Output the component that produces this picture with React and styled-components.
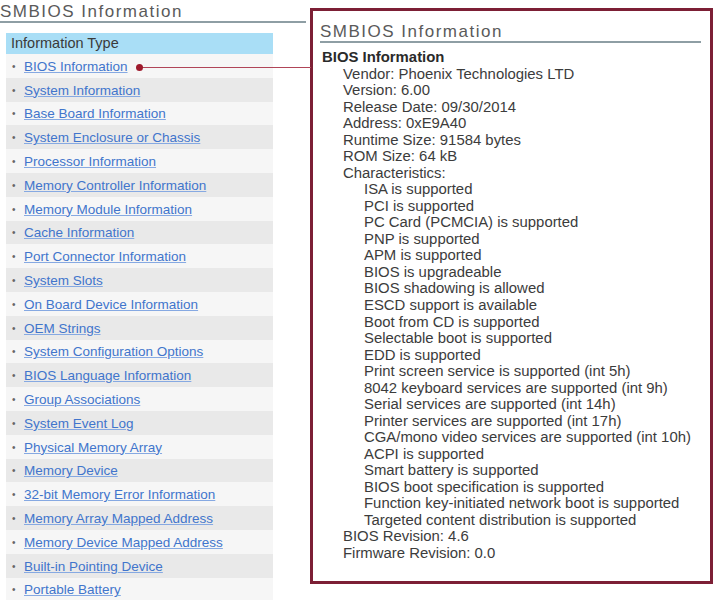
import React from "react";
import styled, { createGlobalStyle } from "styled-components";

const Global = createGlobalStyle`
  html, body { margin: 0; padding: 0; background: #ffffff; }
  body { font-family: "Liberation Sans", Arial, sans-serif; }
`;

const Page = styled.div`
  position: relative;
  width: 720px;
  height: 600px;
  overflow: hidden;
  display: flex;
  align-items: flex-start;
  background: #fff;
`;

const LeftColumn = styled.div`
  width: 306px;
  flex: none;
  padding-top: 2px;
`;

const Title = styled.h1`
  margin: 0;
  font-size: 17px;
  font-weight: normal;
  letter-spacing: 1.5px;
  color: #5a5a5a;
  line-height: 19px;
  border-bottom: 2px solid #8e9ea4;
`;

const TypeList = styled.div`
  margin: 10px 0 0 6px;
  width: 267px;
`;

const TypeHeader = styled.div`
  background: #a9def6;
  color: #3a3a3a;
  font-size: 14.5px;
  height: 21px;
  line-height: 21px;
  padding-left: 5px;
`;

const Row = styled.div`
  height: 23.8px;
  display: flex;
  align-items: center;
  padding-top: 1px;
  box-sizing: border-box;
  background: ${(p) => (p.$alt ? "#e9e9e9" : "#f6f6f6")};
  font-size: 13.5px;
`;

const Bullet = styled.span`
  width: 18px;
  padding-left: 6px;
  box-sizing: border-box;
  color: #666;
  font-size: 10px;
`;

const Link = styled.a`
  color: #4175cc;
  text-decoration: underline;
  text-decoration-color: #86a9e2;
  cursor: pointer;
`;

const Panel = styled.div`
  margin: 8px 0 0 4px;
  width: 403px;
  height: 576px;
  box-sizing: border-box;
  border: 3px solid #7c1f35;
  padding: 11px 9px 0 7px;
  flex: none;
`;

const Body = styled.div`
  padding: 6px 0 0 2px;
  color: #3c3c3c;
  font-size: 14.9px;
  line-height: 16.53px;
`;

const Heading = styled.div`
  font-weight: bold;
  color: #2a2a2a;
`;

const Line = styled.div`
  padding-left: ${(p) => p.$indent}px;
  white-space: nowrap;
`;

const Connector = styled.div`
  position: absolute;
  left: 139px;
  top: 66.5px;
  width: 172px;
  height: 1.5px;
  background: #b04558;
`;

const Dot = styled.div`
  position: absolute;
  left: 135.5px;
  top: 64px;
  width: 7px;
  height: 7px;
  border-radius: 50%;
  background: #9e1a2c;
`;

const types = [
  "BIOS Information",
  "System Information",
  "Base Board Information",
  "System Enclosure or Chassis",
  "Processor Information",
  "Memory Controller Information",
  "Memory Module Information",
  "Cache Information",
  "Port Connector Information",
  "System Slots",
  "On Board Device Information",
  "OEM Strings",
  "System Configuration Options",
  "BIOS Language Information",
  "Group Associations",
  "System Event Log",
  "Physical Memory Array",
  "Memory Device",
  "32-bit Memory Error Information",
  "Memory Array Mapped Address",
  "Memory Device Mapped Address",
  "Built-in Pointing Device",
  "Portable Battery",
];

const fields = [
  "Vendor: Phoenix Technologies LTD",
  "Version: 6.00",
  "Release Date: 09/30/2014",
  "Address: 0xE9A40",
  "Runtime Size: 91584 bytes",
  "ROM Size: 64 kB",
  "Characteristics:",
];

const characteristics = [
  "ISA is supported",
  "PCI is supported",
  "PC Card (PCMCIA) is supported",
  "PNP is supported",
  "APM is supported",
  "BIOS is upgradeable",
  "BIOS shadowing is allowed",
  "ESCD support is available",
  "Boot from CD is supported",
  "Selectable boot is supported",
  "EDD is supported",
  "Print screen service is supported (int 5h)",
  "8042 keyboard services are supported (int 9h)",
  "Serial services are supported (int 14h)",
  "Printer services are supported (int 17h)",
  "CGA/mono video services are supported (int 10h)",
  "ACPI is supported",
  "Smart battery is supported",
  "BIOS boot specification is supported",
  "Function key-initiated network boot is supported",
  "Targeted content distribution is supported",
];

export default function App() {
  return (
    <>
      <Global />
      <Page>
        <LeftColumn>
          <Title>SMBIOS Information</Title>
          <TypeList>
            <TypeHeader>Information Type</TypeHeader>
            {types.map((t, i) => (
              <Row key={t} $alt={i % 2 === 1}>
                <Bullet>•</Bullet>
                <Link>{t}</Link>
              </Row>
            ))}
          </TypeList>
        </LeftColumn>
        <Panel>
          <Title>SMBIOS Information</Title>
          <Body>
            <Heading>BIOS Information</Heading>
            {fields.map((f) => (
              <Line key={f} $indent={21}>{f}</Line>
            ))}
            {characteristics.map((c) => (
              <Line key={c} $indent={42}>{c}</Line>
            ))}
            <Line $indent={21}>BIOS Revision: 4.6</Line>
            <Line $indent={21}>Firmware Revision: 0.0</Line>
          </Body>
        </Panel>
        <Connector />
        <Dot />
      </Page>
    </>
  );
}
